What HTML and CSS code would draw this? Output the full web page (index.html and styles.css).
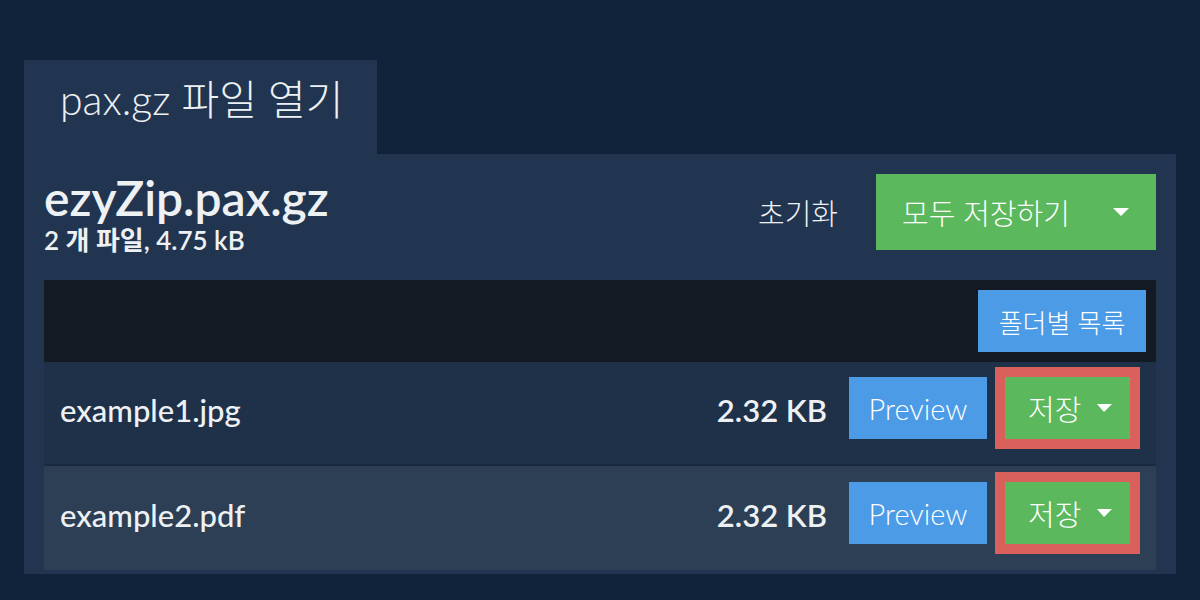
FILE: index.html
```html
<!DOCTYPE html>
<html lang="ko">
<head>
    <meta charset="UTF-8">
    <meta name="viewport" content="width=device-width, initial-scale=1.0">
    <title>pax.gz 파일 열기</title>
    <link rel="stylesheet" href="styles.css">
</head>
<body>

    <div class="tab">pax.gz 파일 열기</div>

    <div class="panel">
        <div class="panel-head">
            <div>
                <h1>ezyZip.pax.gz</h1>
                <div class="summary">2 개 파일, 4.75 kB</div>
            </div>
            <div class="head-actions">
                <a class="reset">초기화</a>
                <button class="btn btn-green btn-big">
                    <span>모두 저장하기</span>
                    <span class="caret"></span>
                </button>
            </div>
        </div>

        <div class="toolbar">
            <button class="btn btn-blue btn-folder">폴더별 목록</button>
        </div>

        <div class="file-list">
            <div class="file-row">
                <span class="file-name">example1.jpg</span>
                <span class="file-size">2.32 KB</span>
                <button class="btn btn-blue btn-preview">Preview</button>
                <div class="highlight">
                    <button class="btn btn-green btn-save">
                        <span>저장</span>
                        <span class="caret"></span>
                    </button>
                </div>
            </div>
            <div class="file-row alt">
                <span class="file-name">example2.pdf</span>
                <span class="file-size">2.32 KB</span>
                <button class="btn btn-blue btn-preview">Preview</button>
                <div class="highlight">
                    <button class="btn btn-green btn-save">
                        <span>저장</span>
                        <span class="caret"></span>
                    </button>
                </div>
            </div>
        </div>
    </div>

</body>
</html>
```

FILE: styles.css
```css
body {
    margin: 0;
    padding: 60px 24px 0;
    background-color: #10233a;
    color: #eef1f4;
    font-family: Lato, "Noto Sans CJK KR", sans-serif;
}
.tab {
    display: inline-block;
    width: 353px;
    height: 94px;
    box-sizing: border-box;
    padding: 16px 0 0 36px;
    background-color: #213550;
    font-size: 41px;
    font-weight: 300;
    line-height: 48px;
}
.panel {
    background-color: #213550;
    padding: 20px 20px 4px;
}
.panel-head {
    display: flex;
    justify-content: space-between;
    align-items: flex-start;
    height: 106px;
}
h1 {
    margin: 0;
    font-size: 48px;
    font-weight: 600;
    line-height: 48px;
}
.summary {
    font-size: 26px;
    font-weight: 600;
    line-height: 30px;
    margin-top: 3px;
}
.head-actions {
    display: flex;
    align-items: center;
    gap: 38px;
}
.reset {
    font-size: 29px;
    font-weight: 300;
}
.btn {
    border: none;
    color: #fff;
    font-family: inherit;
    cursor: pointer;
    display: flex;
    align-items: center;
    justify-content: center;
}
.btn-green {
    background-color: #5cb85c;
}
.btn-blue {
    background-color: #4c9be6;
}
.btn-big {
    width: 280px;
    height: 76px;
    font-size: 29px;
    font-weight: 300;
    justify-content: space-between;
    padding: 0 27px 0 26px;
}
.caret {
    width: 0;
    height: 0;
    border-left: 8px solid transparent;
    border-right: 8px solid transparent;
    border-top: 8px solid #fff;
}
.toolbar {
    background-color: #131a24;
    height: 82px;
    display: flex;
    justify-content: flex-end;
    align-items: center;
    padding-right: 10px;
}
.btn-folder {
    width: 168px;
    height: 62px;
    font-size: 26px;
    font-weight: 300;
}
.file-row {
    display: flex;
    align-items: center;
    height: 104px;
    box-sizing: border-box;
    padding: 6px 16px 16px 16px;
    background-color: #1f3149;
    border-bottom: 2px solid #1a293c;
}
.file-row.alt {
    background-color: #2c3f55;
    border-bottom: none;
}
.file-name {
    flex: 1;
    font-size: 31px;
    font-weight: 500;
    margin-top: 4px;
}
.file-size {
    font-size: 31px;
    font-weight: 600;
    margin-right: 22px;
    margin-top: 4px;
}
.btn-preview {
    width: 138px;
    height: 62px;
    font-size: 29px;
    font-weight: 300;
    margin-right: 8px;
}
.highlight {
    border: 10px solid #d9605b;
}
.btn-save {
    width: 125px;
    height: 62px;
    font-size: 29px;
    font-weight: 300;
    justify-content: space-between;
    padding: 0 18px 0 23px;
}
.btn-save .caret {
    border-left-width: 7px;
    border-right-width: 8px;
}
```
